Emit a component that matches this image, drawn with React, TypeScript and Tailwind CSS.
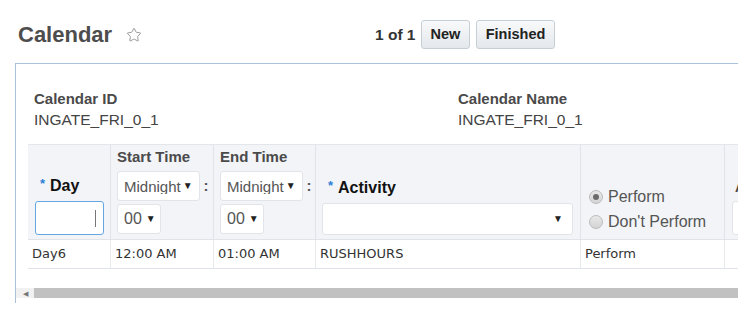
import { Star } from 'lucide-react';

function Caret() {
  return <span className="text-[10px] text-[#222] leading-none shrink-0">▼</span>;
}

function TimeSelect({ value, wide }: { value: string; wide?: boolean }) {
  return (
    <div
      className={`flex items-center h-[30px] border border-[#e1e4e8] rounded-[3px] bg-white pl-[6px] ${
        wide ? 'w-[83px] gap-[2px] pr-[6px]' : 'w-[44px] gap-[4px] pr-[5px]'
      }`}
    >
      <span
        className={`text-[#555] overflow-hidden whitespace-nowrap leading-none ${
          wide ? 'text-[15px] flex-1 min-w-0' : 'text-[16px] shrink-0'
        }`}
      >
        {value}
      </span>
      <Caret />
    </div>
  );
}

function TimeCell({ label }: { label: string }) {
  return (
    <div className="flex flex-col">
      <div className="text-[15px] font-bold text-[#4a4a4a] leading-[18px] mb-[5px]">{label}</div>
      <div className="flex items-center">
        <TimeSelect value="Midnight" wide />
        <span className="ml-[4px] text-[15px] font-bold text-[#555]">:</span>
      </div>
      <div className="mt-[3px]">
        <TimeSelect value="00" />
      </div>
    </div>
  );
}

function Radio({ checked, label }: { checked?: boolean; label: string }) {
  return (
    <div className="flex items-center gap-[5px] h-[25px]">
      <span className="w-[14px] h-[14px] rounded-full border border-[#bbb] bg-gradient-to-b from-[#e8e8e8] to-[#d4d4d4] flex items-center justify-center">
        {checked && <span className="w-[6px] h-[6px] rounded-full bg-[#6b6b6b]" />}
      </span>
      <span className="text-[16px] text-[#555]">{label}</span>
    </div>
  );
}

export default function App() {
  const row = ['Day6', '12:00 AM', '01:00 AM', 'RUSHHOURS', 'Perform', ''];
  const widths = ['w-[83px]', 'w-[103px]', 'w-[102px]', 'w-[265px]', 'w-[144px]', 'w-[120px]'];

  return (
    <div className="w-[750px] h-[310px] bg-white overflow-hidden font-['Liberation_Sans',Arial,sans-serif] text-[#333]">
      {/* Page header */}
      <div className="flex items-center h-[29px] mt-[20px] pl-[18px]">
        <div className="flex items-center w-[357px]">
          <h1 className="text-[22px] font-bold text-[#4d4d4d] leading-none">Calendar</h1>
          <Star className="w-[16px] h-[16px] ml-[14px] text-[#9a9a9a]" strokeWidth={1.5} />
        </div>
        <span className="text-[15.5px] font-bold text-[#333] w-[46px]">1 of 1</span>
        <button className="h-[29px] w-[49px] border border-[#c6ced6] rounded-[3px] bg-gradient-to-b from-[#f8f9fa] to-[#e4e8ec] text-[14.5px] font-bold text-[#222]">
          New
        </button>
        <button className="h-[29px] w-[79px] ml-[6px] border border-[#c6ced6] rounded-[3px] bg-gradient-to-b from-[#f8f9fa] to-[#e4e8ec] text-[14.5px] font-bold text-[#222]">
          Finished
        </button>
      </div>

      {/* Panel */}
      <div className="mt-[14px] ml-[15px] w-[723px] h-[240px] border-l border-t border-[#a9c1da] overflow-hidden">
        <div className="flex pt-[26px] pl-[18px]">
          <div className="w-[424px]">
            <div className="text-[15px] font-bold text-[#4a4a4a] leading-[18px]">Calendar ID</div>
            <div className="text-[15.5px] text-[#444] leading-[22px] mt-[1px]">INGATE_FRI_0_1</div>
          </div>
          <div>
            <div className="text-[15px] font-bold text-[#4a4a4a] leading-[18px]">Calendar Name</div>
            <div className="text-[15.5px] text-[#444] leading-[22px] mt-[1px]">INGATE_FRI_0_1</div>
          </div>
        </div>

        {/* Table */}
        <div className="ml-[12px] mt-[13px] w-[830px]">
          <div className="flex h-[95px] bg-[#f2f4f7] border-t border-[#e3e7eb]">
            <div className={`${widths[0]} shrink-0 border-r border-[#e0e4e8] flex flex-col justify-end px-[7px] pb-[4px]`}>
              <div className="text-[16px] font-bold text-[#111] mb-[3px] ml-[5px]">
                <span className="text-[#2f7fd8] text-[13px] mr-[5px] align-top">*</span>Day
              </div>
              <div className="w-[69px] h-[34px] border-[1.5px] border-[#66a6e3] rounded-[3px] bg-white flex items-center justify-end pr-[7px]">
                <span className="w-px h-[17px] bg-[#777]" />
              </div>
            </div>
            <div className={`${widths[1]} shrink-0 border-r border-[#e0e4e8] flex flex-col justify-end px-[6px] pb-[5px]`}>
              <TimeCell label="Start Time" />
            </div>
            <div className={`${widths[2]} shrink-0 border-r border-[#e0e4e8] flex flex-col justify-end px-[6px] pb-[5px]`}>
              <TimeCell label="End Time" />
            </div>
            <div className={`${widths[3]} shrink-0 border-r border-[#e0e4e8] flex flex-col justify-end px-[6px] pb-[4px]`}>
              <div className="text-[16px] font-bold text-[#111] mb-[3px] ml-[6px]">
                <span className="text-[#2f7fd8] text-[13px] mr-[5px] align-top">*</span>Activity
              </div>
              <div className="w-[251px] h-[32px] border border-[#e1e4e8] rounded-[3px] bg-white flex items-center justify-end pr-[9px]">
                <Caret />
              </div>
            </div>
            <div className={`${widths[4]} shrink-0 border-r border-[#e0e4e8] flex flex-col justify-end pl-[8px] pb-[5px]`}>
              <Radio checked label="Perform" />
              <Radio label="Don't Perform" />
            </div>
            <div className={`${widths[5]} shrink-0 flex flex-col justify-end pl-[7px] pb-[4px]`}>
              <div className="text-[14px] font-bold text-[#4a4a4a] mb-[3px] ml-[3px]">A</div>
              <div className="w-[100px] h-[34px] border border-[#e1e4e8] rounded-[3px] bg-white" />
            </div>
          </div>
          <div className="flex h-[30px] border-t border-b border-[#e0e4e8] bg-white">
            {row.map((cell, i) => (
              <div
                key={i}
                className={`${widths[i]} shrink-0 ${i < 5 ? 'border-r border-[#e8ebee]' : ''} flex items-center px-[4px] font-['DejaVu_Sans',Verdana,sans-serif] text-[13px] text-[#333]`}
              >
                {cell}
              </div>
            ))}
          </div>
        </div>

        {/* Horizontal scrollbar */}
        <div className="flex h-[10px] mt-[19px]">
          <div className="w-[18px] h-full bg-[#f1f1f1] flex items-center justify-center">
            <span className="text-[7px] text-[#777] leading-none">◀</span>
          </div>
          <div className="flex-1 h-full bg-[#c1c1c1]" />
        </div>
      </div>
    </div>
  );
}
